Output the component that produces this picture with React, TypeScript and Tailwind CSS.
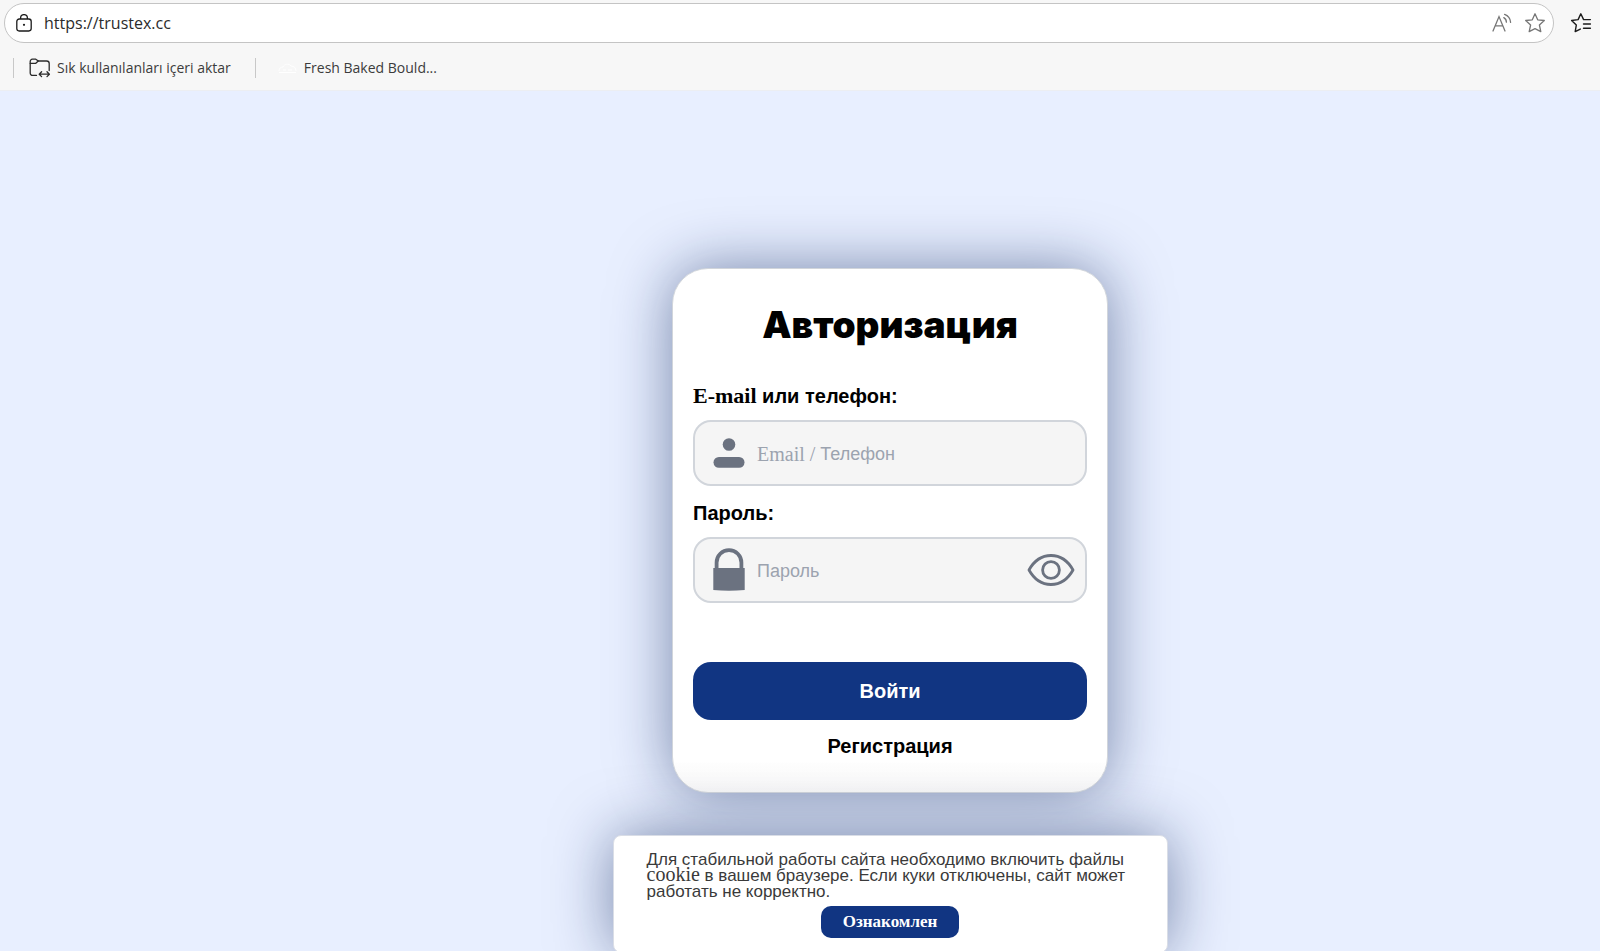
import { useState } from 'react';
import type { FormEvent, ReactNode } from 'react';

const SERIF = "font-['Liberation_Serif',serif]";

const LockIcon = () => (
  <svg width="16" height="18" viewBox="0 0 16 18" fill="none" stroke="#1b1b1b" strokeWidth="1.3">
    <rect x="0.8" y="5" width="14.4" height="12" rx="2.4" />
    <path d="M4.6 5V4a3.4 3.4 0 0 1 6.8 0v1" />
    <circle cx="8" cy="10.8" r="1.1" fill="#1b1b1b" stroke="none" />
  </svg>
);

const ReadAloudIcon = () => (
  <svg width="20" height="20" viewBox="0 0 20 20" fill="none" stroke="#767676" strokeWidth="1.3" strokeLinecap="round">
    <path d="M1 18 7 3.600 13 18M3.300 12.800h7.400" />
    <path d="M11.800 4.600c1.600.9 2.600 2.600 2.600 4.600M12.600 1.400c3.400 1.200 5.700 4.200 6 8" />
  </svg>
);

const StarIcon = () => (
  <svg width="22" height="22" viewBox="0 0 22 22" fill="none" stroke="#767676" strokeWidth="1.3" strokeLinejoin="round">
    <path d="m11 1.800 2.700 6 6.600.7-4.900 4.500 1.400 6.600L11 16.700l-5.800 2.900L6.600 13 1.700 8.500l6.600-.7z" />
  </svg>
);

const FavoritesIcon = () => (
  <svg width="22" height="22" viewBox="0 0 22 22" fill="none" stroke="#1b1b1b" strokeWidth="1.4" strokeLinejoin="round" strokeLinecap="round">
    <path d="M20.400 7.600h-6.800L10.800 1.800 8.100 7.600l-6.500.9 4.700 4.600-1.100 6.500 5.100-2.500" />
    <path d="M13.500 12h6.900M13.500 16.200h6.900" />
  </svg>
);

const ImportFolderIcon = () => (
  <svg width="22" height="20" viewBox="0 0 22 20" fill="none" stroke="#2b2b2b" strokeWidth="1.3" strokeLinejoin="round" strokeLinecap="round">
    <path d="M7.500 17.400H3.600A2.400 2.400 0 0 1 1.200 15V3.400A2.200 2.200 0 0 1 3.400 1.200h3.400L9.300 3h8.300a2.600 2.600 0 0 1 2.600 2.600v7" />
    <path d="M1.200 5.300h5.600L9.300 3" />
    <path d="M10.200 16.200h10.200M12.600 13.800l-2.400 2.400 2.400 2.400M18 13.800l2.400 2.400-2.400 2.400" />
  </svg>
);

const UserIcon = () => (
  <svg width="32" height="30" viewBox="0 0 32 30" fill="#6b7280">
    <circle cx="16" cy="6.500" r="6.300" />
    <rect x="0.500" y="19" width="31" height="10.800" rx="5.400" />
  </svg>
);

const PadlockIcon = () => (
  <svg width="32" height="44" viewBox="0 0 32 44">
    <path d="M3.600 22V14.500a12.400 12.400 0 0 1 24.800 0V22" fill="none" stroke="#6b7280" strokeWidth="3.800" />
    <path d="M0.300 20h31.400v22q-15.700 1.600-31.400 0z" fill="#6b7280" />
  </svg>
);

const EyeIcon = () => (
  <svg width="48" height="34" viewBox="0 0 48 34" fill="none" stroke="#6b7280" strokeWidth="2.800" strokeLinejoin="round">
    <path d="M2 17C7 8 15 2.500 24 2.500S41 8 46 17C41 26 33 31.500 24 31.500S7 26 2 17z" />
    <circle cx="24" cy="17" r="8.400" />
  </svg>
);

function BrowserBar() {
  return (
    <header className="shrink-0 bg-[#f7f7f7] pb-3 pt-[3px] font-['Open_Sans',sans-serif]">
      <div className="flex items-center gap-4 pl-1 pr-2">
        <div className="flex h-10 grow items-center gap-3 rounded-full border border-[#c4c4c4] bg-white pl-[11px] pr-[7px]">
          <LockIcon />
          <input
            aria-label="Adres"
            defaultValue="https://trustex.cc"
            className="min-w-0 grow bg-transparent text-base text-[#2b2b2b] outline-none"
          />
          <button aria-label="Sesli oku"><ReadAloudIcon /></button>
          <button aria-label="Sık kullanılanlara ekle"><StarIcon /></button>
        </div>
        <button aria-label="Sık kullanılanlar"><FavoritesIcon /></button>
      </div>
      <nav className="mt-[15px] flex h-5 items-center pl-[13px] text-sm text-[#3c3c3c]">
        <span className="h-5 w-px bg-[#c8c8c8]" />
        <button className="ml-[15px] flex items-center gap-[6px]">
          <ImportFolderIcon />
          Sık kullanılanları içeri aktar
        </button>
        <span className="ml-6 h-5 w-px bg-[#c8c8c8]" />
        <a href="#" className="ml-[22px] flex items-center gap-[7px]">
          <svg width="19" height="12" viewBox="0 0 19 12" fill="none" stroke="#ffffff" strokeWidth="1">
            <path d="M1 9c0-3 2-4 4-4 1-3 6-4 8-1 3 0 5 2 5 5M1 10.500h17M5 8h3M10 8h4" />
          </svg>
          Fresh Baked Bould...
        </a>
      </nav>
    </header>
  );
}

interface FieldProps {
  id: string;
  type: string;
  icon: ReactNode;
  hint: ReactNode;
  label: string;
  action?: ReactNode;
}

// The hint sits over the input and disappears once something is typed
const Field = ({ id, type, icon, hint, label, action }: FieldProps) => (
  <div className="flex h-[66px] items-center rounded-[18px] border-2 border-[#d1d5db] bg-[#f5f5f5] pl-[18px] pr-[10px]">
    {icon}
    <div className="relative ml-3 min-w-0 grow pt-[2px]">
      <input id={id} type={type} placeholder=" " aria-label={label} className="peer w-full bg-transparent text-lg outline-none" />
      <span className="pointer-events-none absolute inset-0 hidden items-center whitespace-pre pt-[2px] text-lg text-[#9ca3af] peer-placeholder-shown:flex">
        {hint}
      </span>
    </div>
    {action}
  </div>
);

export default function App() {
  const [visible, setVisible] = useState(false);
  const [cookies, setCookies] = useState(true);

  const submit = (e: FormEvent) => e.preventDefault();

  return (
    <div className="flex h-screen flex-col overflow-hidden bg-[#e8efff] font-['Liberation_Sans',sans-serif] text-black">
      <BrowserBar />

      <main className="flex grow flex-col items-center border-t border-[#eceef2] pl-[180px] pt-[177px]">
        <form
          onSubmit={submit}
          className="flex w-full max-w-[436px] shrink-0 flex-col rounded-[36px] border border-[#d1d5db] bg-white bg-linear-to-b from-white from-94% to-[#f8f8f8] px-5 pb-[34px] pt-9 shadow-[0_0_60px_rgba(8,31,87,0.5)]"
        >
          <h1 className="text-center font-['Inter',sans-serif] text-[37px] font-black leading-10">Авторизация</h1>

          <label htmlFor="login" className="mt-[39px] text-xl font-bold leading-6">
            <span className={`${SERIF} text-[22px] leading-none`}>E-mail</span> или телефон:
          </label>
          <div className="mt-3">
            <Field
              id="login"
              type="text"
              label="Email / Телефон"
              icon={<UserIcon />}
              hint={<><span className={`${SERIF} text-xl`}>Email / </span>Телефон</>}
            />
          </div>

          <label htmlFor="password" className="mt-[15px] text-xl font-bold leading-6">Пароль:</label>
          <div className="mt-3">
            <Field
              id="password"
              type={visible ? 'text' : 'password'}
              label="Пароль"
              icon={<PadlockIcon />}
              hint="Пароль"
              action={
                <button type="button" aria-label="Показать пароль" onClick={() => setVisible(v => !v)}>
                  <EyeIcon />
                </button>
              }
            />
          </div>

          <button type="submit" className="mt-[59px] h-[58px] rounded-[18px] bg-[#113582] text-xl font-bold text-white">
            Войти
          </button>
          <a href="#" className="mt-[14px] text-center text-xl font-bold leading-6">Регистрация</a>
        </form>

        {/* Cookies */}
        {cookies && (
          <div className="mt-[42px] flex w-full max-w-[555px] shrink-0 flex-col items-center rounded-lg border border-[#d9dde6] bg-white px-[33px] pb-[14px] pt-4 shadow-[0_0_60px_rgba(8,31,87,0.5)]">
            <p className="w-full text-[17px] leading-4 text-[#3a3a3a]">
              Для стабильной работы сайта необходимо включить файлы{' '}
              <span className={`${SERIF} text-xl leading-3`}>cookie</span> в вашем браузере. Если куки отключены, сайт может работать не корректно.
            </p>
            <button
              onClick={() => setCookies(false)}
              className={`mt-[6px] h-8 w-[138px] rounded-[10px] bg-[#113582] text-[17px] font-bold text-white ${SERIF}`}
            >
              Ознакомлен
            </button>
          </div>
        )}
      </main>
    </div>
  );
}
